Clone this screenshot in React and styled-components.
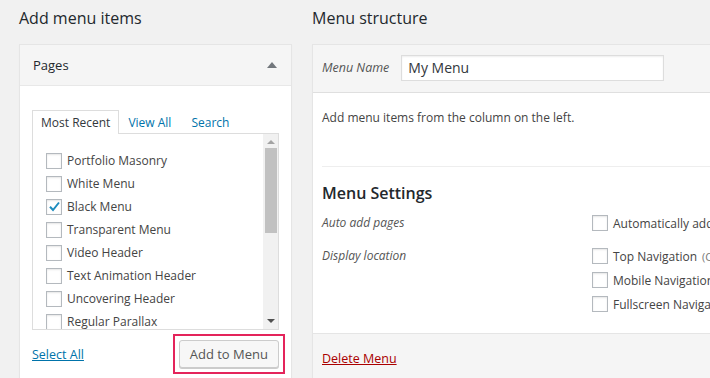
import React from 'react'
import styled, { createGlobalStyle } from 'styled-components'

const Global = createGlobalStyle`
  html, body {
    margin: 0;
    padding: 0;
    background: #f1f1f1;
    overflow: hidden;
  }
  body {
    font-family: "Open Sans", "Noto Sans", sans-serif;
    color: #444;
    font-size: 12px;
  }
`

const Page = styled.div`
  display: flex;
  gap: 20px;
  padding-left: 19px;
  width: 1000px;
`

const Column = styled.div`
  flex: 0 0 ${p => p.$width}px;
  display: flex;
  flex-direction: column;
`

const Heading = styled.h2`
  margin: 0 0 8px;
  height: 36px;
  line-height: 36px;
  font-size: 16px;
  font-weight: 500;
  color: #23282d;
`

const Panel = styled.div`
  background: #fff;
  border: 1px solid #e5e5e5;
  box-shadow: 0 1px 1px rgba(0, 0, 0, 0.04);
  height: 360px;
  display: flex;
  flex-direction: column;
`

const PanelHead = styled.div`
  height: 40px;
  display: flex;
  align-items: center;
  justify-content: space-between;
  padding: 0 14px 0 13px;
  background: #f5f5f5;
  border-bottom: 1px solid #e8e8e8;
  font-size: 13px;
  color: #23282d;
`

const Caret = styled.span`
  width: 0;
  height: 0;
  border-left: 5px solid transparent;
  border-right: 5px solid transparent;
  border-bottom: 6px solid #72777c;
`

const PanelBody = styled.div`
  padding: 23px 12px 0;
`

const Tabs = styled.div`
  display: flex;
  align-items: flex-end;
  height: 24px;
`

const Tab = styled.div`
  height: 24px;
  line-height: 24px;
  padding: 0 8px 0 8px;
  margin-right: ${p => (p.$active ? 0 : 2)}px;
  box-sizing: border-box;
  color: ${p => (p.$active ? '#32373c' : '#0073aa')};
  background: ${p => (p.$active ? '#fff' : 'transparent')};
  border: 1px solid ${p => (p.$active ? '#ddd' : 'transparent')};
  border-bottom: none;
  position: relative;
  top: 1px;
`

const TabPanel = styled.div`
  height: 195px;
  border: 1px solid #ddd;
  display: flex;
  overflow: hidden;
`

const List = styled.ul`
  flex: 1;
  margin: 0;
  padding: 15px 0 0 13px;
  list-style: none;
`

const Item = styled.li`
  height: 23px;
  display: flex;
  align-items: center;
  gap: 5px;
  color: #444;
`

const Box = styled.span`
  width: 14px;
  height: 14px;
  flex: 0 0 14px;
  border: 1px solid #b4b9be;
  background: #fff;
  box-shadow: inset 0 1px 2px rgba(0, 0, 0, 0.1);
  display: flex;
  align-items: center;
  justify-content: center;
`

const Scrollbar = styled.div`
  width: 15px;
  background: #f1f1f1;
  display: flex;
  flex-direction: column;
  align-items: center;
`

const Arrow = styled.span`
  width: 0;
  height: 0;
  border-left: 4px solid transparent;
  border-right: 4px solid transparent;
  ${p => (p.$down ? 'border-top' : 'border-bottom')}: 4px solid ${p => (p.$down ? '#505050' : '#a3a3a3')};
  margin: ${p => (p.$down ? 'auto 0 6px' : '6px 0 4px')};
`

const Thumb = styled.div`
  width: 12px;
  height: 85px;
  background: #c1c1c1;
`

const Actions = styled.div`
  display: flex;
  justify-content: space-between;
  align-items: center;
  margin-top: 4px;
  margin-right: -6px;
`

const TextLink = styled.a`
  color: ${p => p.$color};
  text-decoration: underline;
  font-size: 12.5px;
`

const Highlight = styled.div`
  border: 2px solid #e4245b;
  padding: 4px;
`

const Button = styled.button`
  display: block;
  height: 28px;
  padding: 0 10px;
  font-family: inherit;
  font-size: 13px;
  color: #555;
  background: #f7f7f7;
  border: 1px solid #ccc;
  border-radius: 3px;
  box-shadow: 0 1px 0 #ccc;
`

const MenuHead = styled.div`
  height: 48px;
  box-sizing: border-box;
  background: #f5f5f5;
  border-bottom: 1px solid #dfdfdf;
  display: flex;
  align-items: flex-start;
  padding: 10px 9px 0;
  gap: 12px;
`

const Label = styled.span`
  font-style: italic;
  color: #555;
  font-size: ${p => p.$size || 12}px;
  width: ${p => (p.$width ? `${p.$width}px` : 'auto')};
  flex: 0 0 auto;
  line-height: ${p => p.$lh || 26}px;
`

const Input = styled.div`
  width: 263px;
  height: 26px;
  box-sizing: border-box;
  border: 1px solid #ddd;
  background: #fff;
  box-shadow: inset 0 1px 2px rgba(0, 0, 0, 0.07);
  padding: 0 6px;
  line-height: 24px;
  font-size: 14px;
  color: #32373c;
`

const MenuBody = styled.div`
  padding: 0 0 0 9px;
  height: 241px;
  box-sizing: border-box;
  border-bottom: 1px solid #e5e5e5;
`

const Intro = styled.p`
  margin: 0;
  padding: 15px 0 0;
  height: 74px;
  line-height: 20px;
  box-sizing: border-box;
  border-bottom: 1px solid #eee;
  color: #444;
`

const SubHeading = styled.h3`
  margin: 0;
  padding-top: 14px;
  line-height: 24px;
  font-size: 16px;
  font-weight: 600;
  color: #23282d;
`

const SettingRow = styled.div`
  display: flex;
  margin-top: ${p => p.$mt}px;
`

const Options = styled.div`
  display: flex;
  flex-direction: column;
`

const Option = styled.div`
  height: 24px;
  display: flex;
  align-items: center;
  gap: 5px;
  white-space: nowrap;
  color: #444;
`

const Note = styled.span`
  font-size: 11px;
  color: #777;
`

const MenuFoot = styled.div`
  background: #f5f5f5;
  padding: 16px 9px;
  flex: 1;
`

const Check = () => (
  <svg width="13" height="13" viewBox="0 0 13 13">
    <path d="M2 6.8 L5 10 L11 2.5" fill="none" stroke="#1e8cbe" strokeWidth="2" />
  </svg>
)

const pages = [
  'Portfolio Masonry',
  'White Menu',
  'Black Menu',
  'Transparent Menu',
  'Video Header',
  'Text Animation Header',
  'Uncovering Header',
  'Regular Parallax',
]

export default function App() {
  return (
    <>
      <Global />
      <Page>
        <Column $width={273}>
          <Heading>Add menu items</Heading>
          <Panel>
            <PanelHead>
              Pages
              <Caret />
            </PanelHead>
            <PanelBody>
              <Tabs>
                <Tab $active>Most Recent</Tab>
                <Tab>View All</Tab>
                <Tab>Search</Tab>
              </Tabs>
              <TabPanel>
                <List>
                  {pages.map(p => (
                    <Item key={p}>
                      <Box>{p === 'Black Menu' && <Check />}</Box>
                      {p}
                    </Item>
                  ))}
                </List>
                <Scrollbar>
                  <Arrow />
                  <Thumb />
                  <Arrow $down />
                </Scrollbar>
              </TabPanel>
              <Actions>
                <TextLink href="#" $color="#0073aa">Select All</TextLink>
                <Highlight>
                  <Button>Add to Menu</Button>
                </Highlight>
              </Actions>
            </PanelBody>
          </Panel>
        </Column>
        <Column $width={520}>
          <Heading>Menu structure</Heading>
          <Panel>
            <MenuHead>
              <Label $size={12.5}>Menu Name</Label>
              <Input>My Menu</Input>
            </MenuHead>
            <MenuBody>
              <Intro>Add menu items from the column on the left.</Intro>
              <SubHeading>Menu Settings</SubHeading>
              <SettingRow $mt={6}>
                <Label $width={270} $lh={24}>Auto add pages</Label>
                <Options>
                  <Option>
                    <Box />
                    Automatically add new top-level pages to this menu
                  </Option>
                </Options>
              </SettingRow>
              <SettingRow $mt={9}>
                <Label $width={270} $lh={24}>Display location</Label>
                <Options>
                  <Option>
                    <Box />
                    Top Navigation <Note>(Currently set to: Main)</Note>
                  </Option>
                  <Option>
                    <Box />
                    Mobile Navigation
                  </Option>
                  <Option>
                    <Box />
                    Fullscreen Navigation
                  </Option>
                </Options>
              </SettingRow>
            </MenuBody>
            <MenuFoot>
              <TextLink href="#" $color="#a00">Delete Menu</TextLink>
            </MenuFoot>
          </Panel>
        </Column>
      </Page>
    </>
  )
}
